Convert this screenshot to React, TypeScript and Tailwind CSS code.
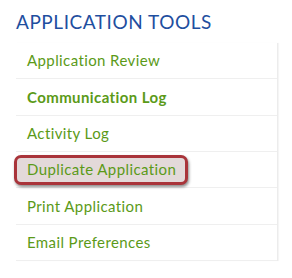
const tools = [
  { label: 'Application Review' },
  { label: 'Communication Log', bold: true },
  { label: 'Activity Log' },
  { label: 'Duplicate Application', marked: true },
  { label: 'Print Application' },
  { label: 'Email Preferences' },
];

export default function App() {
  return (
    <div className="w-[292px] h-[278px] bg-white pt-[10px] font-['Lato','Open_Sans',sans-serif]">
      <h2 className="ml-[16px] text-[19px] leading-[24px] text-[#1f4f9f] tracking-[0.55px]">
        APPLICATION TOOLS
      </h2>
      <ul className="ml-[16px] mt-[9px] w-[262px] border-r border-[#ececec] shadow-[1px_0_1px_rgba(0,0,0,0.04)]">
        {tools.map((t) => (
          <li
            key={t.label}
            className="h-[36.33px] border-b border-[#efefef] pl-[11px] flex items-center text-[15px] tracking-[0.4px] text-[#5b9a18]"
          >
            {t.marked ? (
              <span className="-ml-[13px] pl-[10px] pr-[9px] h-[30px] flex items-center rounded-[7px] border-[3px] border-[#a9343a] bg-[#e3d9d9] shadow-[1px_2px_3px_rgba(0,0,0,0.45)]">
                {t.label}
              </span>
            ) : (
              <span className={t.bold ? 'font-bold' : ''}>{t.label}</span>
            )}
          </li>
        ))}
      </ul>
    </div>
  );
}
